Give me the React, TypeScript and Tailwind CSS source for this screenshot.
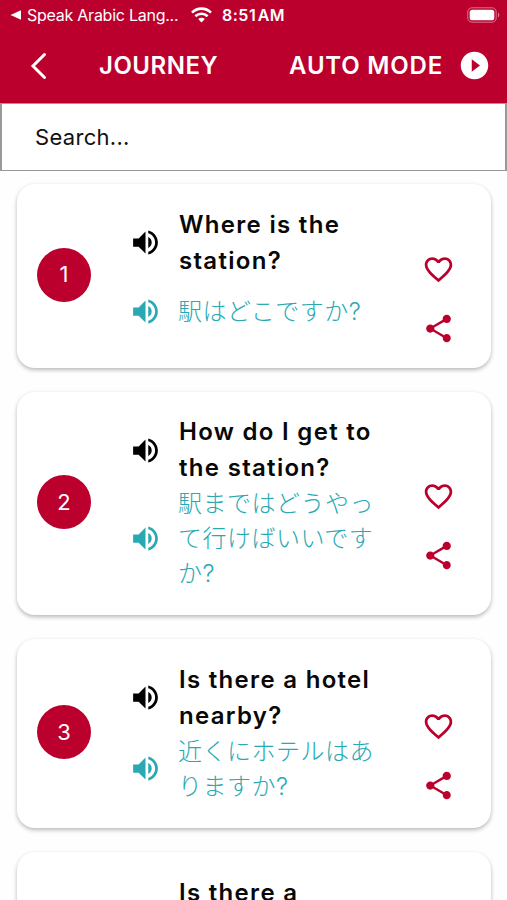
import React, { useState } from 'react';
import { MdFavorite, MdFavoriteBorder, MdPlayCircleFilled, MdShare, MdVolumeUp } from 'react-icons/md';

const phrases = [
  { id: 1, english: ['Where is the', 'station?'], japanese: ['駅はどこですか?'] },
  { id: 2, english: ['How do I get to', 'the station?'], japanese: ['駅まではどうやっ', 'て行けばいいです', 'か?'] },
  { id: 3, english: ['Is there a hotel', 'nearby?'], japanese: ['近くにホテルはあ', 'りますか?'] },
  { id: 4, english: ['Is there a', 'restaurant', 'nearby?'], japanese: ['近くにレストラン', 'はありますか?'] },
];

function StatusBar() {
  return (
    <div className="flex h-[30px] items-center pl-[10px] pr-[7px] text-white">
      <svg width="12" height="10" viewBox="0 0 12 10" fill="currentColor">
        <path d="M0.5 5 L11 0.3 V9.7 Z" />
      </svg>
      <span className="ml-[5px] w-[153px] whitespace-nowrap text-[16px] tracking-[-0.25px]">Speak Arabic Lang...</span>
      <svg className="ml-[11px]" width="21" height="16" viewBox="0 0 21 16" fill="none" stroke="currentColor" strokeWidth="2.6">
        <path d="M1 5.6 C6.3 0.3 14.7 0.3 20 5.6" />
        <path d="M4.4 9.2 C7.8 5.9 13.2 5.9 16.6 9.2" />
        <path d="M10.5 15.4 L7.2 12.1 C9 10.4 12 10.4 13.8 12.1 Z" fill="currentColor" stroke="none" />
      </svg>
      <span className="ml-[10px] whitespace-nowrap text-[16px] font-semibold tracking-[0.5px] [word-spacing:-3px]">8:51 AM</span>
      <svg className="ml-auto" width="33" height="16" viewBox="0 0 33 16" fill="none">
        <rect x="0.8" y="0.8" width="28.4" height="14.4" rx="4.2" stroke="currentColor" strokeOpacity="0.45" />
        <rect x="2.7" y="2.7" width="24.6" height="10.6" rx="2.6" fill="currentColor" />
        <path d="M31 5.5 C32.6 6.2 32.6 9.8 31 10.5 Z" fill="currentColor" fillOpacity="0.5" />
      </svg>
    </div>
  );
}

export default function App() {
  const [search, setSearch] = useState('');
  const [favorites, setFavorites] = useState<number[]>([]);

  const toggleFavorite = (id: number) => {
    setFavorites(favorites.includes(id) ? favorites.filter((f) => f !== id) : [...favorites, id]);
  };

  const visible = phrases.filter((p) => p.english.join(' ').toLowerCase().includes(search.toLowerCase()));

  return (
    <div className="h-[900px] w-full overflow-hidden bg-[#fefefe] font-['Inter','Noto_Sans_CJK_JP',sans-serif]">
      <header className="h-[103px] bg-[#bc002d] text-white">
        <StatusBar />
        <div className="flex h-[71px] items-center pl-[30px] pr-[16px]">
          <button type="button">
            <svg width="18" height="28" viewBox="0 0 18 28" fill="none" stroke="currentColor" strokeWidth="3" strokeLinecap="round">
              <path d="M14.5 2.5 L3 14 L14.5 25.5" />
            </svg>
          </button>
          <h1 className="ml-[51px] whitespace-nowrap pt-px text-[24px] font-semibold tracking-[0.5px]">JOURNEY</h1>
          <button type="button" className="ml-auto flex items-center">
            <span className="whitespace-nowrap text-[24px] font-semibold tracking-[0.8px]">AUTO MODE</span>
            <MdPlayCircleFilled className="ml-[15px] size-[33px]" />
          </button>
        </div>
      </header>
      <input
        type="text"
        value={search}
        onChange={(e) => setSearch(e.target.value)}
        placeholder="Search..."
        className="block h-[68px] w-full border-2 border-t border-b border-[#999] bg-white pl-[33px] text-[22px] tracking-[0.3px] text-black outline-none placeholder:text-[#111]"
      />
      <main className="flex flex-col gap-[24.2px] pt-[13px] pr-[16px] pl-[17px]">
        {visible.map((phrase) => (
          <section
            key={phrase.id}
            className="flex shrink-0 items-center rounded-[18px] bg-white pt-[22.5px] pb-[24px] pl-[20px] shadow-[0_2px_4px_rgba(0,0,0,0.28)]"
          >
            <div className="mb-px flex size-[54px] items-center justify-center rounded-full bg-[#bc002d] text-[22px] text-white">
              {phrase.id}
            </div>
            <div className="ml-[38px] w-[261px]">
              <div className="flex items-center">
                <MdVolumeUp className="size-[33px] shrink-0 text-black" />
                <p className="ml-[17px] whitespace-nowrap text-[24px] leading-[36px] font-semibold tracking-[1.3px] text-[#080808]">
                  {phrase.english.map((line) => (
                    <span key={line} className="block">{line}</span>
                  ))}
                </p>
              </div>
              <div className="flex min-h-[65px] items-center text-[#2aa9b3]">
                <MdVolumeUp className="size-[33px] shrink-0" />
                <p className="ml-[16px] whitespace-nowrap text-[24px] leading-[35px] font-light tracking-[0.5px]">
                  {phrase.japanese.map((line) => (
                    <span key={line} className="block">{line}</span>
                  ))}
                </p>
              </div>
            </div>
            <div className="mt-[46px] -mb-px ml-[31.5px] flex flex-col gap-[26px] text-[#bc002d]">
              <button type="button" onClick={() => toggleFavorite(phrase.id)}>
                {favorites.includes(phrase.id) ? <MdFavorite className="size-[33px]" /> : <MdFavoriteBorder className="size-[33px]" />}
              </button>
              <button type="button">
                <MdShare className="size-[33px]" />
              </button>
            </div>
          </section>
        ))}
      </main>
    </div>
  );
}
